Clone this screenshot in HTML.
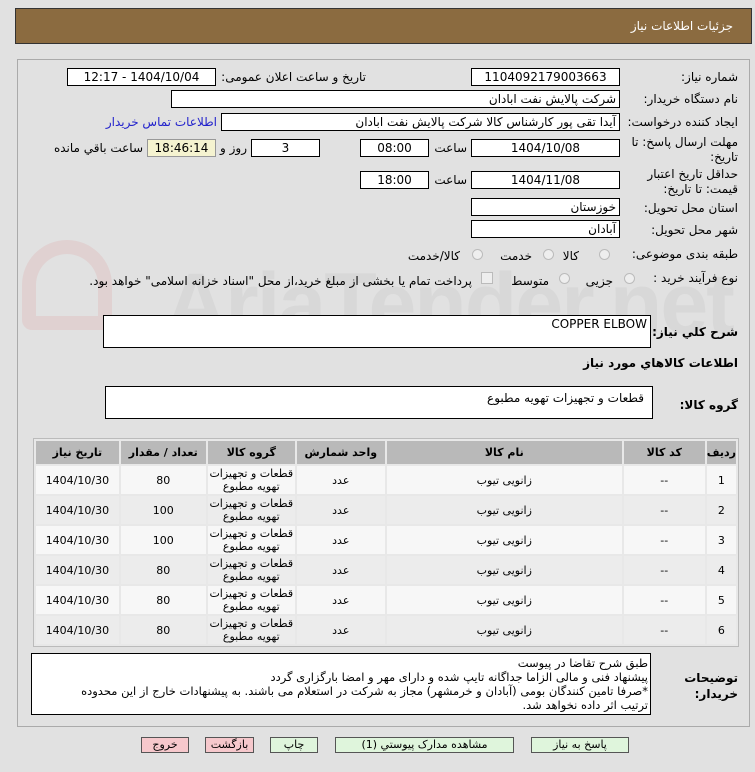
<!DOCTYPE html>
<html><head><meta charset="utf-8">
<style>
*{box-sizing:border-box;margin:0;padding:0}
body{width:755px;height:772px;background:#e1e1e1;font-family:"DejaVu Sans","Liberation Sans",sans-serif;font-size:11px;color:#000;position:relative;overflow:hidden}
.a{position:absolute;white-space:nowrap}
.hdr{left:15px;top:8px;width:737px;height:36px;background:#8b6b40;border:1px solid #333}
.hdr span{position:absolute;right:18px;top:10px;color:#fff;font-size:12px}
.panel{left:17px;top:59px;width:733px;height:668px;border:1px solid #aaa;background:#e1e1e1}
.inp{position:absolute;background:#fff;border:1px solid #000;height:18px;font-size:12px;line-height:16px;direction:rtl;padding:0 3px;white-space:nowrap;overflow:hidden}
.c{text-align:center}
.lb{position:absolute;direction:rtl;white-space:nowrap;font-size:12px}
.b{font-weight:bold}
.rad{position:absolute;width:11px;height:11px;border-radius:50%;border:1px solid #bbb;background:#eee}
table{border-collapse:separate;border-spacing:2px;position:absolute;left:33px;top:438px;width:706px;background:#e8e8e8;border:1px solid #bbb;direction:rtl}
th{background:#b9b9b9;height:23px;font-size:11px;font-weight:bold}
td{height:28px;text-align:center;font-size:11px;line-height:13px}
tr.o td{background:#f7f7f7} tr.e td{background:#ececec}
.btn{position:absolute;top:737px;height:16px;border:1px solid #555;font-size:11px;text-align:center;line-height:14px;direction:rtl}
.g{background:#dff5dc}.p{background:#f6c8cc}
.wm{left:165px;top:255px;font-size:86px;font-weight:bold;color:rgba(160,160,160,.13);font-family:"Liberation Sans",sans-serif;letter-spacing:-2px}
</style></head><body>
<div class="a hdr"><span>جزئيات اطلاعات نياز</span></div>
<div class="a panel"></div>
<div class="a wm">AriaTender.net</div>
<div class="a" style="left:22px;top:240px;width:90px;height:90px;border:14px solid rgba(220,120,120,.15);border-radius:50% 50% 10px 10px"></div>

<div class="lb" style="right:17px;top:70px">شماره نیاز:</div>
<div class="inp c" style="left:471px;top:68px;width:149px">1104092179003663</div>
<div class="lb" style="right:389px;top:70px">تاریخ و ساعت اعلان عمومی:</div>
<div class="inp c" style="left:67px;top:68px;width:149px">1404/10/04 - 12:17</div>

<div class="lb" style="right:17px;top:92px">نام دستگاه خریدار:</div>
<div class="inp" style="left:171px;top:90px;width:449px">شرکت پالایش نفت ابادان</div>

<div class="lb" style="right:17px;top:115px">ایجاد کننده درخواست:</div>
<div class="inp" style="left:221px;top:113px;width:399px">آیدا تقی پور کارشناس کالا شرکت پالایش نفت ابادان</div>
<div class="lb" style="right:538px;top:115px;color:#2222cc">اطلاعات تماس خریدار</div>

<div class="lb" style="right:17px;top:135px;line-height:15px">مهلت ارسال پاسخ: تا<br>تاریخ:</div>
<div class="inp c" style="left:471px;top:139px;width:149px">1404/10/08</div>
<div class="lb" style="right:288px;top:141px">ساعت</div>
<div class="inp c" style="left:360px;top:139px;width:69px">08:00</div>
<div class="inp c" style="left:251px;top:139px;width:69px">3</div>
<div class="lb" style="right:508px;top:141px">روز و</div>
<div class="inp c" style="left:147px;top:139px;width:69px;background:#f5f3d0;border-color:#999">18:46:14</div>
<div class="lb" style="right:612px;top:141px">ساعت باقي مانده</div>

<div class="lb" style="right:17px;top:167px;line-height:15px">حداقل تاریخ اعتبار<br>قیمت: تا تاریخ:</div>
<div class="inp c" style="left:471px;top:171px;width:149px">1404/11/08</div>
<div class="lb" style="right:288px;top:173px">ساعت</div>
<div class="inp c" style="left:360px;top:171px;width:69px">18:00</div>

<div class="lb" style="right:17px;top:201px">استان محل تحویل:</div>
<div class="inp" style="left:471px;top:198px;width:149px">خوزستان</div>
<div class="lb" style="right:17px;top:223px">شهر محل تحویل:</div>
<div class="inp" style="left:471px;top:220px;width:149px">آبادان</div>

<div class="lb" style="right:17px;top:247px">طبقه بندی موضوعی:</div>
<div class="rad" style="left:599px;top:249px"></div><div class="lb" style="right:176px;top:249px">کالا</div>
<div class="rad" style="left:543px;top:249px"></div><div class="lb" style="right:223px;top:249px">خدمت</div>
<div class="rad" style="left:472px;top:249px"></div><div class="lb" style="right:295px;top:249px">کالا/خدمت</div>

<div class="lb" style="right:17px;top:271px">نوع فرآیند خرید :</div>
<div class="rad" style="left:624px;top:273px"></div><div class="lb" style="right:142px;top:274px">جزیی</div>
<div class="rad" style="left:559px;top:273px"></div><div class="lb" style="right:206px;top:274px">متوسط</div>
<div class="a" style="left:481px;top:272px;width:12px;height:12px;border:1px solid #bbb;background:#eee"></div>
<div class="lb" style="right:283px;top:274px">پرداخت تمام یا بخشی از مبلغ خرید،از محل "اسناد خزانه اسلامی" خواهد بود.</div>

<div class="lb b" style="right:17px;top:325px">شرح كلي نياز:</div>
<div class="inp" style="left:103px;top:315px;width:548px;height:33px;direction:ltr;text-align:right">COPPER ELBOW</div>
<div class="lb b" style="right:17px;top:356px">اطلاعات كالاهاي مورد نياز</div>
<div class="lb b" style="right:17px;top:398px">گروه کالا:</div>
<div class="inp" style="left:105px;top:386px;width:548px;height:33px;padding:4px 8px;line-height:14px">قطعات و تجهیزات تهویه مطبوع</div>

<table>
<tr><th style="width:28px">رديف</th><th style="width:81px">کد کالا</th><th style="width:235px">نام کالا</th><th style="width:88px">واحد شمارش</th><th style="width:87px">گروه کالا</th><th style="width:85px">تعداد / مقدار</th><th>تاریخ نیاز</th></tr>
<tr class="o"><td>1</td><td>--</td><td>زانویی تیوب</td><td>عدد</td><td>قطعات و تجهیزات<br>تهویه مطبوع</td><td>80</td><td>1404/10/30</td></tr>
<tr class="e"><td>2</td><td>--</td><td>زانویی تیوب</td><td>عدد</td><td>قطعات و تجهیزات<br>تهویه مطبوع</td><td>100</td><td>1404/10/30</td></tr>
<tr class="o"><td>3</td><td>--</td><td>زانویی تیوب</td><td>عدد</td><td>قطعات و تجهیزات<br>تهویه مطبوع</td><td>100</td><td>1404/10/30</td></tr>
<tr class="e"><td>4</td><td>--</td><td>زانویی تیوب</td><td>عدد</td><td>قطعات و تجهیزات<br>تهویه مطبوع</td><td>80</td><td>1404/10/30</td></tr>
<tr class="o"><td>5</td><td>--</td><td>زانویی تیوب</td><td>عدد</td><td>قطعات و تجهیزات<br>تهویه مطبوع</td><td>80</td><td>1404/10/30</td></tr>
<tr class="e"><td>6</td><td>--</td><td>زانویی تیوب</td><td>عدد</td><td>قطعات و تجهیزات<br>تهویه مطبوع</td><td>80</td><td>1404/10/30</td></tr>
</table>

<div class="lb b" style="right:17px;top:670px;line-height:16px">توضیحات<br>خریدار:</div>
<div class="inp" style="left:31px;top:653px;width:620px;height:62px;white-space:normal;line-height:14px;font-size:11.5px;padding:2px 2px 0 22px">طبق شرح تقاضا در پیوست<br>پیشنهاد فنی و مالی الزاما جداگانه تایپ شده و دارای مهر و امضا بارگزاری گردد<br>*صرفا تامین کنندگان بومی (آبادان و خرمشهر) مجاز به شرکت در استعلام می باشند. به پیشنهادات خارج از این محدوده ترتیب اثر داده نخواهد شد.</div>

<div class="btn g" style="left:531px;width:98px">پاسخ به نیاز</div>
<div class="btn g" style="left:335px;width:179px">مشاهده مدارک پیوستي (1)</div>
<div class="btn g" style="left:270px;width:48px">چاپ</div>
<div class="btn p" style="left:205px;width:49px">بازگشت</div>
<div class="btn p" style="left:141px;width:48px">خروج</div>
</body></html>
